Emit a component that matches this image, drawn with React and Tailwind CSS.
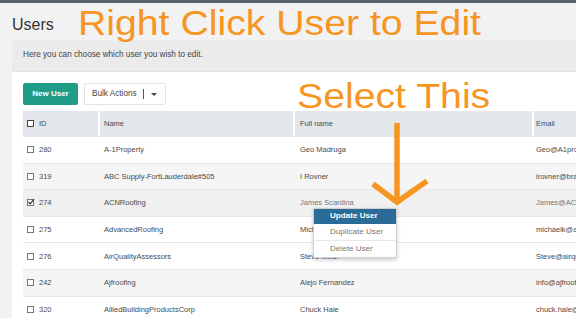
import React from "react";

const rows = [
  { id: "280", name: "A-1Property", full: "Geo Madruga", email: "Geo@A1property.com", bg: "bg-white" },
  { id: "319", name: "ABC Supply-FortLauderdale#505", full: "I Rovner", email: "irovner@brandabc.com", bg: "bg-[#f5f5f5]" },
  { id: "274", name: "ACNRoofing", full: "James Scardina", email: "James@ACNRoofing.com", bg: "bg-[#f0f0f0]", checked: true, light: true },
  { id: "275", name: "AdvancedRoofing", full: "Michael Kline", email: "michaelk@advancedroofing.com", bg: "bg-white" },
  { id: "276", name: "AirQualityAssessors", full: "Steve Miller", email: "Steve@airqualityassessors.com", bg: "bg-white" },
  { id: "242", name: "Ajfroofing", full: "Alejo Fernandez", email: "info@ajfroofing.com", bg: "bg-[#f5f5f5]" },
  { id: "320", name: "AlliedBuildingProductsCorp", full: "Chuck Hale", email: "chuck.hale@alliedbuilding.com", bg: "bg-white" },
];

function Box({ checked, dark }) {
  return (
    <span
      className={`relative inline-block w-[7px] h-[7px] border ${dark ? "border-[#444]" : "border-[#777]"} bg-white shrink-0`}
    >
      {checked && (
        <svg className="absolute left-[-1px] top-[-2px]" width="8" height="8" viewBox="0 0 8 8">
          <path d="M1.5 4 L3.2 5.8 L7 1.2" stroke="#333" strokeWidth="1.2" fill="none" />
        </svg>
      )}
    </span>
  );
}

export default function App() {
  return (
    <div className="relative w-[576px] h-[318px] overflow-hidden bg-[#f2f2f2] font-['Liberation_Sans',Arial,sans-serif]">
      <div className="h-[3px] bg-[#5a6068]" />
      <div className="h-[37px] pl-3 pt-[10px]">
        <span className="text-[16px] leading-none text-[#333]">Users</span>
      </div>
      <div className="ml-3 w-[564px]">
        <div className="h-[32px] bg-[#ebebeb] border-b border-[#e2e2e2] pl-[11px] flex items-center">
          <span className="text-[8.2px] text-[#444]">Here you can choose which user you wish to edit.</span>
        </div>
        <div className="bg-white pl-[11px] pt-[11px] h-[260px]">
          <div className="flex gap-[6px] h-[22px]">
            <div className="w-[55px] h-[22px] rounded-[2px] bg-[#1f9d87] flex items-center justify-center text-white text-[8px] font-semibold">
              New User
            </div>
            <div className="w-[82px] h-[22px] rounded-[2px] border border-[#e3e3e3] bg-white flex items-center pl-[7px] text-[8.2px] text-[#444]">
              <span>Bulk Actions</span>
              <span className="ml-[6px] w-px h-[10px] bg-[#555]" />
              <span className="ml-[7px] w-0 h-0 border-l-[3px] border-r-[3px] border-t-[3px] border-l-transparent border-r-transparent border-t-[#444]" />
            </div>
          </div>
          <div className="mt-[6px] text-[7.5px] text-[#4a4a4a]">
            <div className="flex h-[25px] bg-[#e3e7ec]">
              <div className="w-[77px] shrink-0 border-r-2 border-white flex items-center gap-[5px] pl-[4px]">
                <Box dark />
                <span>ID</span>
              </div>
              <div className="w-[195px] shrink-0 border-r-2 border-white flex items-center pl-[4px]">Name</div>
              <div className="w-[239px] shrink-0 border-r-2 border-white flex items-center pl-[5px]">Full name</div>
              <div className="flex-1 min-w-0 flex items-center pl-[2px]">Email</div>
            </div>
            {rows.map((r) => (
              <div
                key={r.id}
                className={`flex h-[26.6px] border-t border-[#e8e8e8] ${r.bg} text-[#4a4a4a]`}
              >
                <div className="w-[77px] shrink-0 flex items-center gap-[5px] pl-[4px]">
                  <Box checked={r.checked} />
                  <span>{r.id}</span>
                </div>
                <div className="w-[195px] shrink-0 flex items-center pl-[4px] whitespace-nowrap">{r.name}</div>
                <div className={`w-[239px] shrink-0 flex items-center pl-[5px] whitespace-nowrap ${r.light ? "text-[#777]" : ""}`}>{r.full}</div>
                <div className={`flex-1 min-w-0 overflow-hidden flex items-center pl-[2px] whitespace-nowrap ${r.light ? "text-[#777]" : ""}`}>{r.email}</div>
              </div>
            ))}
          </div>
        </div>
      </div>

      {/* annotations */}
      <div className="absolute left-[78px] top-[5px] text-[35px] leading-none text-[#f6951f] whitespace-nowrap origin-left scale-x-[1.12]">
        Right Click User to Edit
      </div>
      <div className="absolute left-[297px] top-[78px] text-[35px] leading-none text-[#f6951f] whitespace-nowrap origin-left scale-x-[1.12]">
        Select This
      </div>
      <svg className="absolute left-0 top-0 pointer-events-none" width="576" height="318" viewBox="0 0 576 318">
        <line x1="397" y1="123" x2="397" y2="201" stroke="#f6951f" strokeWidth="5.5" />
        <polyline points="373,184 397,202 427,181" stroke="#f6951f" strokeWidth="5.5" fill="none" strokeLinejoin="miter" />
      </svg>

      {/* context menu */}
      <div className="absolute left-[313px] top-[208px] w-[84px] bg-white border border-[#d0d0d0] shadow-[0_2px_4px_rgba(0,0,0,0.2)] text-[8.1px] text-[#777]">
        <div className="h-[15px] bg-[#2a6b97] text-white font-bold flex items-center pl-[16px]">Update User</div>
        <div className="h-[17px] flex items-center pl-[16px] border-b border-[#e8e8e8]">Duplicate User</div>
        <div className="h-[16px] flex items-center pl-[16px]">Delete User</div>
      </div>
    </div>
  );
}
